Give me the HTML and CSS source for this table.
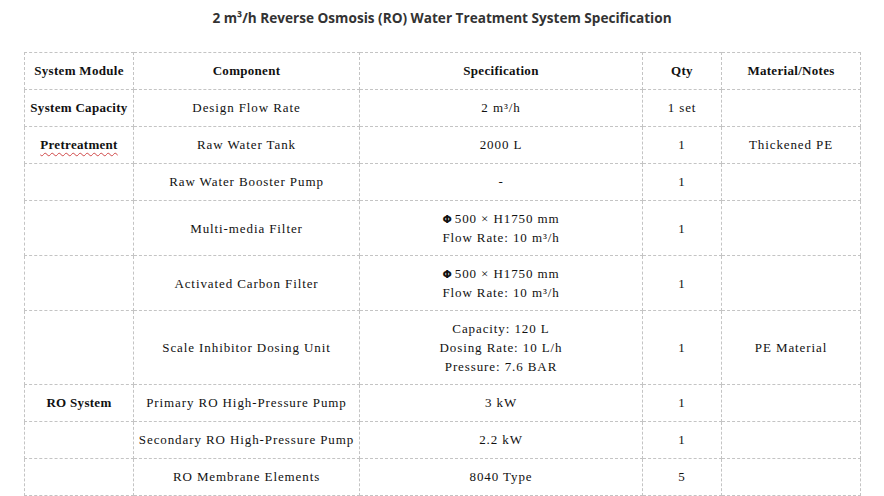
FILE: index.html
```html
<!DOCTYPE html>
<html>
<head>
<meta charset="utf-8">
<link rel="stylesheet" href="styles.css">
</head>
<body>
<div class="page">
  <h1 class="title">2 m³/h Reverse Osmosis (RO) Water Treatment System Specification</h1>
  <table class="spec">
    <colgroup>
      <col class="c1"><col class="c2"><col class="c3"><col class="c4"><col class="c5">
    </colgroup>
    <thead>
      <tr><th>System Module</th><th>Component</th><th>Specification</th><th>Qty</th><th>Material/Notes</th></tr>
    </thead>
    <tbody>
      <tr><td class="mod">System Capacity</td><td>Design Flow Rate</td><td>2 m³/h</td><td>1 set</td><td></td></tr>
      <tr><td class="mod"><span class="spell">Pretreatment</span></td><td>Raw Water Tank</td><td>2000 L</td><td>1</td><td>Thickened PE</td></tr>
      <tr><td></td><td>Raw Water Booster Pump</td><td>-</td><td>1</td><td></td></tr>
      <tr class="multi"><td></td><td>Multi-media Filter</td><td><span class="phi">Φ</span>500 × H1750 mm<br>Flow Rate: 10 m³/h</td><td>1</td><td></td></tr>
      <tr class="multi"><td></td><td>Activated Carbon Filter</td><td><span class="phi">Φ</span>500 × H1750 mm<br>Flow Rate: 10 m³/h</td><td>1</td><td></td></tr>
      <tr class="multi"><td></td><td>Scale Inhibitor Dosing Unit</td><td>Capacity: 120 L<br>Dosing Rate: 10 L/h<br>Pressure: 7.6 BAR</td><td>1</td><td>PE Material</td></tr>
      <tr><td class="mod">RO System</td><td>Primary RO High-Pressure Pump</td><td>3 kW</td><td>1</td><td></td></tr>
      <tr><td></td><td>Secondary RO High-Pressure Pump</td><td>2.2 kW</td><td>1</td><td></td></tr>
      <tr><td></td><td>RO Membrane Elements</td><td>8040 Type</td><td>5</td><td></td></tr>
    </tbody>
  </table>
</div>
</body>
</html>
```

FILE: styles.css
```css
html, body {
  margin: 0;
  padding: 0;
  background: #ffffff;
}

.page {
  padding: 0 0 0 24px;
  width: 836px;
}

.title {
  margin: 0 0 24px 0;
  padding-top: 8px;
  line-height: 20px;
  font-family: "Open Sans", "Noto Sans", sans-serif;
  font-size: 13.6px;
  font-weight: 700;
  color: #333333;
  text-align: center;
}

.spec {
  width: 836px;
  table-layout: fixed;
  border-collapse: collapse;
  font-family: "Liberation Serif", "DejaVu Serif", serif;
  font-size: 13px;
  letter-spacing: 0.9px;
  color: #111111;
}

.c1 { width: 109px; }
.c2 { width: 226px; }
.c3 { width: 283px; }
.c4 { width: 79px; }
.c5 { width: 139px; }

.spec th,
.spec td {
  border: 1px dashed #c4c4c4;
  padding: 8px 0 9px 0;
  line-height: 19px;
  text-align: center;
  vertical-align: middle;
  white-space: nowrap;
  overflow: visible;
}

.spec tr.multi td {
  padding: 8px 0 8px 0;
}

.spec th {
  font-weight: 700;
  letter-spacing: 0.3px;
}

.spec td.mod {
  font-weight: 700;
  letter-spacing: 0.3px;
}

.spell {
  text-decoration: underline wavy #d04848;
  text-decoration-thickness: 1px;
  text-underline-offset: 3px;
}

.phi {
  font-family: "DejaVu Sans", sans-serif;
  font-weight: 700;
  font-size: 11px;
  line-height: 1;
  margin-right: 2px;
}
```
